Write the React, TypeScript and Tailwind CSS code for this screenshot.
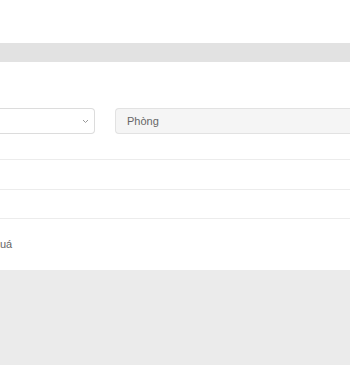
import React from "react";

export default function App() {
  return (
    <div className="w-[350px] h-[365px] overflow-hidden bg-[#ebebeb] flex flex-col" style={{ fontFamily: '"Liberation Sans", Arial, sans-serif' }}>
      <div className="h-[43px] bg-white" />
      <div className="h-[19px] bg-[#e2e2e2]" />
      <div className="h-[208px] bg-white flex flex-col">
        <div className="h-[46px]" />
        <div className="flex items-stretch h-[26px] gap-[20px]">
          <div className="w-[95px] border border-l-0 border-[#dcdcdc] rounded-r-[4px] flex items-center justify-end pr-[5px]">
            <svg width="7" height="5" viewBox="0 0 7 5">
              <path d="M1 1 L3.5 3.5 L6 1" fill="none" stroke="#999" strokeWidth="1" />
            </svg>
          </div>
          <div className="flex-1 border border-r-0 border-[#e2e2e2] bg-[#f5f5f5] rounded-l-[4px] flex items-center pl-[11px] text-[11px] text-[#666]">
            Phòng
          </div>
        </div>
        <div className="h-[26px] border-b border-[#ececec]" />
        <div className="h-[30px] border-b border-[#ececec]" />
        <div className="h-[29px] border-b border-[#ececec]" />
        <div className="flex-1 flex items-center text-[11px] text-[#666] leading-none -mt-[1px]">
          uá
        </div>
      </div>
    </div>
  );
}
